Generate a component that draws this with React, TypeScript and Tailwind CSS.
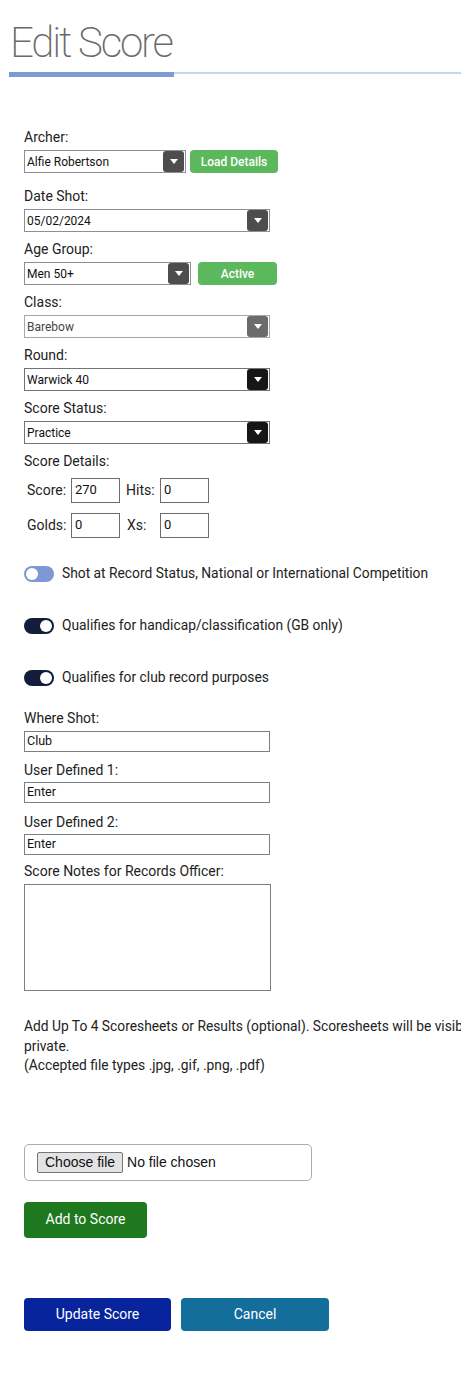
import React from 'react';

type Tone = 'mid' | 'light' | 'dark';

const arrowTone: Record<Tone, string> = {
  mid: 'bg-[#4d4d4d]',
  light: 'bg-[#6b6b6b]',
  dark: 'bg-[#161616]',
};

const borderTone: Record<Tone, string> = {
  mid: 'border-[#8a8f99]',
  light: 'border-[#a3a7ae]',
  dark: 'border-[#6f737b]',
};

const FakeSelect = ({ value, width, tone = 'mid' }: { value: string; width: string; tone?: Tone }) => (
  <div className={`flex h-[23px] items-center justify-between border bg-white pl-[2px] pr-[1px] ${borderTone[tone]} ${width}`}>
    <span className={`text-[12px] leading-none ${tone === 'light' ? 'text-[#444]' : 'text-[#111]'}`}>{value}</span>
    <span className={`flex h-[21px] w-[21px] items-center justify-center rounded-[3px] ${arrowTone[tone]}`}>
      <svg width="8" height="5" viewBox="0 0 8 5">
        <path d="M0 0h8L4 5z" fill="#ffffff" />
      </svg>
    </span>
  </div>
);

const Label = ({ children, className = '' }: { children: React.ReactNode; className?: string }) => (
  <div className={`text-[14px] leading-[17px] text-[#222] ${className}`}>{children}</div>
);

const Toggle = ({ on, label, className = '' }: { on: boolean; label: string; className?: string }) => (
  <div className={`flex h-[17px] items-center gap-[8px] ${className}`}>
    <span
      className={`flex h-[16px] w-[30px] items-center rounded-full px-[2px] ${
        on ? 'justify-end bg-[#131c3a]' : 'justify-start bg-[#7d98d3]'
      }`}
    >
      <span className="h-[12px] w-[12px] rounded-full bg-white" />
    </span>
    <span className="text-[13.8px] text-[#222]">{label}</span>
  </div>
);

const SmallInput = ({ value }: { value: string }) => (
  <div className="h-[25px] w-[49px] border border-[#6d6d6d] bg-white pl-[3px] pt-[3px] text-[13px] leading-[15px] text-[#111]">
    {value}
  </div>
);

const TextBox = ({ value }: { value: string }) => (
  <div className="flex h-[21px] w-[246px] items-center border border-[#7b7f88] bg-white pl-[2px] text-[12.5px] text-[#111]">
    {value}
  </div>
);

export default function App() {
  return (
    <div className="min-h-screen w-full overflow-hidden bg-white font-['Roboto','Liberation_Sans',sans-serif]">
      <h1 className="pl-[10px] pt-[22px] text-[42px] font-extralight leading-none tracking-[-2.2px] text-[#6a6a6a]">
        Edit Score
      </h1>
      <div className="mt-[8px] flex items-start pl-[9px]">
        <div className="h-[5px] w-[165px] bg-[#7e9bd1]" />
        <div className="h-[2px] flex-1 bg-[#c7d5ee]" />
      </div>

      <div className="mt-[52px] pl-[24px]">
        <Label className="mb-[4px]">Archer:</Label>
        <div className="flex items-center gap-[4px]">
          <FakeSelect value="Alfie Robertson" width="w-[162px]" />
          <button className="h-[23px] w-[88px] rounded-[4px] bg-[#5cb85c] text-[12px] font-medium text-white">
            Load Details
          </button>
        </div>

        <Label className="mb-[4px] mt-[15px]">Date Shot:</Label>
        <FakeSelect value="05/02/2024" width="w-[246px]" />

        <Label className="mb-[4px] mt-[9px]">Age Group:</Label>
        <div className="flex items-center gap-[7px]">
          <FakeSelect value="Men 50+" width="w-[167px]" />
          <button className="h-[23px] w-[79px] rounded-[4px] bg-[#5cb85c] text-[12px] font-medium text-white">Active</button>
        </div>

        <Label className="mb-[4px] mt-[9px]">Class:</Label>
        <FakeSelect value="Barebow" width="w-[246px]" tone="light" />

        <Label className="mb-[4px] mt-[9px]">Round:</Label>
        <FakeSelect value="Warwick 40" width="w-[246px]" tone="dark" />

        <Label className="mb-[4px] mt-[9px]">Score Status:</Label>
        <FakeSelect value="Practice" width="w-[246px]" tone="dark" />

        <Label className="mb-[8px] mt-[9px]">Score Details:</Label>
        <div className="flex flex-col gap-[10px] pl-[3px]">
          <div className="flex items-center text-[14px] text-[#222]">
            <span className="w-[44px]">Score:</span>
            <SmallInput value="270" />
            <span className="ml-[6px] w-[34px]">Hits:</span>
            <SmallInput value="0" />
          </div>
          <div className="flex items-center text-[14px] text-[#222]">
            <span className="w-[44px]">Golds:</span>
            <SmallInput value="0" />
            <span className="ml-[7px] w-[33px]">Xs:</span>
            <SmallInput value="0" />
          </div>
        </div>

        <Toggle on={false} label="Shot at Record Status, National or International Competition" className="mt-[27px]" />
        <Toggle on label="Qualifies for handicap/classification (GB only)" className="mt-[35px]" />
        <Toggle on label="Qualifies for club record purposes" className="mt-[35px]" />

        <Label className="mb-[4px] mt-[24px]">Where Shot:</Label>
        <TextBox value="Club" />

        <Label className="mb-[3px] mt-[10px]">User Defined 1:</Label>
        <TextBox value="Enter" />

        <Label className="mb-[3px] mt-[11px]">User Defined 2:</Label>
        <TextBox value="Enter" />

        <Label className="mb-[4px] mt-[8px]">Score Notes for Records Officer:</Label>
        <div className="h-[107px] w-[247px] border border-[#7b7f88] bg-white" />

        <div className="mt-[26px] whitespace-nowrap text-[13.8px] leading-[19.5px] text-[#222]">
          Add Up To 4 Scoresheets or Results (optional). Scoresheets will be visible to all members unless marked
          <br />
          private.
          <br />
          (Accepted file types .jpg, .gif, .png, .pdf)
        </div>

        <div className="mt-[68px] flex h-[37px] w-[288px] items-center rounded-[5px] border border-[#ababab] bg-white pl-[12px]">
          <span className="flex h-[21px] items-center rounded-[2px] border border-[#767676] bg-[#e3e3e3] px-[7px] font-['Liberation_Sans',sans-serif] text-[14px] text-[#111]">
            Choose file
          </span>
          <span className="ml-[4px] font-['Liberation_Sans',sans-serif] text-[14px] text-[#111]">No file chosen</span>
        </div>

        <button className="mt-[21px] h-[36px] w-[123px] rounded-[4px] bg-[#1e781e] text-[14px] text-white">Add to Score</button>

        <div className="mt-[60px] flex gap-[10px] pb-[42px]">
          <button className="h-[33px] w-[147px] rounded-[4px] bg-[#07249c] text-[14px] text-white">Update Score</button>
          <button className="h-[33px] w-[148px] rounded-[4px] bg-[#146e9c] text-[14px] text-white">Cancel</button>
        </div>
      </div>
    </div>
  );
}
